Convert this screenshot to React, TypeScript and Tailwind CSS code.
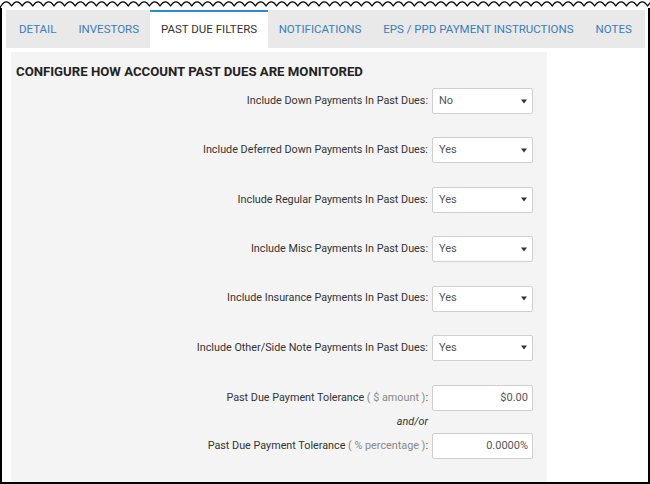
import React from "react"

const tabs = ["DETAIL", "INVESTORS", "PAST DUE FILTERS", "NOTIFICATIONS", "EPS / PPD PAYMENT INSTRUCTIONS", "NOTES"]
const active = "PAST DUE FILTERS"

const selectRows = [
  { label: "Include Down Payments In Past Dues:", value: "No" },
  { label: "Include Deferred Down Payments In Past Dues:", value: "Yes" },
  { label: "Include Regular Payments In Past Dues:", value: "Yes" },
  { label: "Include Misc Payments In Past Dues:", value: "Yes" },
  { label: "Include Insurance Payments In Past Dues:", value: "Yes" },
  { label: "Include Other/Side Note Payments In Past Dues:", value: "Yes" },
]

// torn paper edge along the top of the screenshot frame
function TornEdge() {
  const period = 10.6
  let d = "M0,8 L1,6"
  for (let x = 1; x < 650; x += period) {
    d += ` Q${(x + period / 2).toFixed(2)},-2.2 ${(x + period).toFixed(2)},6`
  }
  return (
    <svg width="650" height="8" viewBox="0 0 650 8" className="block shrink-0">
      <path d={d} fill="none" stroke="#000" strokeWidth="1.3" strokeLinejoin="round" />
    </svg>
  )
}

function FakeSelect({ value }: { value: string }) {
  return (
    <div className="flex h-[26px] w-[101px] shrink-0 items-center justify-between rounded-[2px] border border-[#cfcfcf] bg-white pl-[6px] pr-[5px] text-[11px] text-[#555]">
      <span>{value}</span>
      <svg width="6" height="5" viewBox="0 0 6 5">
        <path d="M0 0.5h6L3 4.5z" fill="#333" />
      </svg>
    </div>
  )
}

function FakeInput({ value }: { value: string }) {
  return (
    <div className="flex h-[26px] w-[101px] shrink-0 items-center justify-end rounded-[2px] border border-[#cfcfcf] bg-white pr-[4px] text-[11px] text-[#555]">
      {value}
    </div>
  )
}

export default function App() {
  return (
    <div
      className="flex h-[484px] w-[650px] flex-col bg-white"
      style={{ fontFamily: "Roboto, 'Liberation Sans', sans-serif" }}
    >
      <TornEdge />
      <div className="flex flex-1 flex-col border-x-2 border-b-2 border-black">
        <div className="ml-[4px] mr-[3px] mt-[2px] flex h-[38px] bg-[#e9e9e9] pl-[2px]">
          {tabs.map((t) =>
            t === active ? (
              <div
                key={t}
                className="flex shrink-0 items-center whitespace-nowrap border-t-2 border-[#2b8ad0] bg-white pl-[11px] pr-[10.5px] text-[11.5px] text-[#333]"
              >
                {t}
              </div>
            ) : (
              <div
                key={t}
                className="flex shrink-0 items-center whitespace-nowrap px-[11px] pt-[2px] text-[11.5px] text-[#3a7db8]"
              >
                {t}
              </div>
            )
          )}
        </div>

        <div className="ml-[9px] mt-[4px] flex w-[536px] flex-1 flex-col bg-[#f4f4f4]">
          <h2 className="pl-[5px] pt-[12px] text-[13.2px] font-bold leading-[16px] text-[#222]">
            CONFIGURE HOW ACCOUNT PAST DUES ARE MONITORED
          </h2>

          <div className="mt-[8px] flex flex-col gap-[23.4px] pr-[14px]">
            {selectRows.map((r) => (
              <div key={r.label} className="flex items-center justify-end gap-[4px]">
                <span className="whitespace-nowrap text-[10.8px] text-[#333]">{r.label}</span>
                <FakeSelect value={r.value} />
              </div>
            ))}
          </div>

          <div className="mt-[24px] flex flex-col pr-[14px]">
            <div className="flex items-center justify-end gap-[4px]">
              <span className="whitespace-nowrap text-[10.8px] text-[#333]">
                Past Due Payment Tolerance <span className="text-[#888]">( $ amount )</span>:
              </span>
              <FakeInput value="$0.00" />
            </div>
            <div className="flex h-[22px] items-center justify-end pr-[105px] text-[10.8px] italic text-[#333]">
              and/or
            </div>
            <div className="flex items-center justify-end gap-[4px]">
              <span className="whitespace-nowrap text-[10.8px] text-[#333]">
                Past Due Payment Tolerance <span className="text-[#888]">( % percentage )</span>:
              </span>
              <FakeInput value="0.0000%" />
            </div>
          </div>
        </div>
      </div>
    </div>
  )
}
